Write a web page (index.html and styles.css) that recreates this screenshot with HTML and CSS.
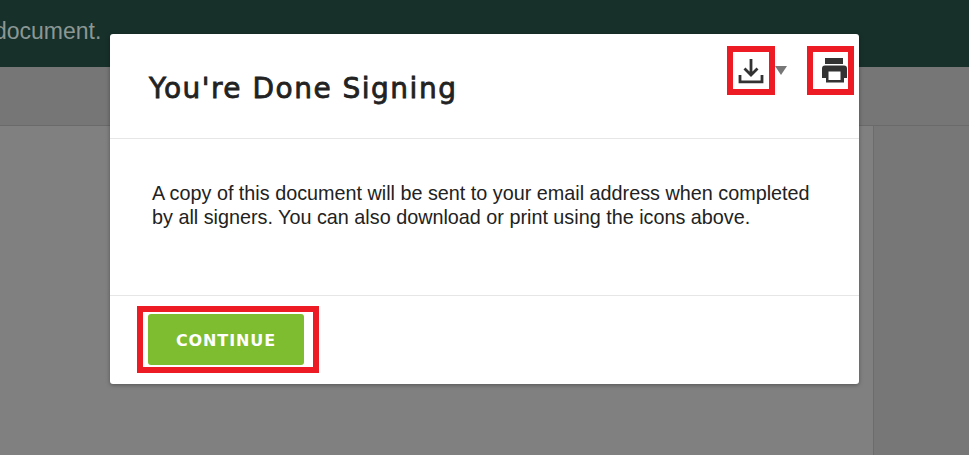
FILE: index.html
```html
<!DOCTYPE html>
<html lang="en">
<head>
    <meta charset="UTF-8">
    <title>You're Done Signing</title>
    <link rel="stylesheet" href="styles.css">
</head>
<body>
    <div class="topbar"><span class="topbar-text">document.</span></div>
    <div class="toolbar"></div>
    <div class="workspace">
        <div class="doc-area"></div>
        <div class="side-panel"></div>
    </div>

    <div class="modal">
        <div class="modal-header">
            <h1>You're Done Signing</h1>
            <div class="modal-tools">
                <span class="mark mark-download">
                    <svg class="icon" width="26" height="26" viewBox="0 0 26 26">
                        <path d="M13 1V17M6.500 10.500L13 17l6.500-6.500" fill="none" stroke="#333" stroke-width="2.800"/>
                        <path d="M2 17v6.800h22V17" fill="none" stroke="#333" stroke-width="2.800"/>
                    </svg>
                </span>
                <span class="caret"></span>
                <span class="mark mark-print">
                    <svg class="icon-print" width="25" height="25" viewBox="0 0 25 25">
                        <path d="M3 0h18v6H3z" fill="#333"/>
                        <path fill-rule="evenodd" d="M3 7.500h19q3 0 3 3V20h-3v4.500H4V20H0v-9.500q0-3 3-3zM6.500 13.500V22h12v-8.500z" fill="#333"/>
                    </svg>
                </span>
            </div>
        </div>
        <div class="modal-body">
            <p>A copy of this document will be sent to your email address when completed by all signers. You can also download or print using the icons above.</p>
        </div>
        <div class="modal-footer">
            <span class="mark mark-continue">
                <button type="button">CONTINUE</button>
            </span>
        </div>
    </div>
</body>
</html>
```

FILE: styles.css
```css
html, body {
    height: 100%;
}
body {
    margin: 0;
    overflow: hidden;
    display: flex;
    flex-direction: column;
    font-family: "Liberation Sans", Arial, sans-serif;
    background-color: #808080;
}
.topbar {
    height: 67px;
    background-color: #17302a;
    color: #8b9794;
    font-size: 23px;
    line-height: 63px;
    white-space: nowrap;
    overflow: hidden;
}
.topbar-text {
    display: block;
    margin-left: -6px;
}
.toolbar {
    height: 58px;
    background-color: #767676;
    border-bottom: 1px solid #6a6a6a;
}
.workspace {
    flex: 1;
    display: flex;
}
.doc-area {
    flex: 1;
}
.side-panel {
    width: 95px;
    border-left: 1px solid #6c6c6c;
    background-color: #777;
}
.modal {
    position: absolute;
    left: 110px;
    top: 34px;
    width: 749px;
    height: 350px;
    background-color: #fff;
    border-radius: 3px;
    box-shadow: 0 1px 4px rgba(0, 0, 0, 0.35);
    display: flex;
    flex-direction: column;
}
.modal-header {
    height: 105px;
    box-sizing: border-box;
    border-bottom: 1px solid #e6e6e6;
    padding: 34px 6px 0 39px;
    display: flex;
    justify-content: space-between;
    align-items: flex-start;
}
h1 {
    margin: 0;
    color: #222;
    font-family: "DejaVu Sans", sans-serif;
    font-size: 28px;
    font-weight: normal;
    line-height: 41px;
    letter-spacing: 1.500px;
    -webkit-text-stroke: 0.8px #222;
}
.modal-tools {
    display: flex;
    align-items: center;
    margin-top: -22px;
}
.mark {
    display: flex;
    align-items: center;
    justify-content: center;
    box-sizing: border-box;
    border: 6px solid #ed1c24;
}
.mark-download {
    width: 48px;
    height: 49px;
}
.mark-print {
    width: 47px;
    height: 49px;
    margin-left: 20px;
    margin-right: -1px;
    padding-left: 7px;
}
.caret {
    width: 0;
    height: 0;
    border-style: solid;
    border-width: 9px 6px 0;
    border-color: #777 transparent transparent;
}
.modal-body {
    flex: 1;
    padding: 42px 30px 0 42px;
}
.modal-body p {
    margin: 0;
    color: #222;
    font-size: 19.800px;
    line-height: 24px;
}
.modal-footer {
    height: 89px;
    box-sizing: border-box;
    border-top: 1px solid #e6e6e6;
    padding: 10px 0 0 27px;
}
.mark-continue {
    width: 182px;
    height: 67px;
    padding-right: 4px;
}
button {
    flex: none;
    width: 156px;
    height: 51px;
    padding: 2px 0 0;
    border: none;
    border-radius: 3px;
    background-color: #7dbd2f;
    color: #fff;
    font-family: "DejaVu Sans", sans-serif;
    font-size: 16px;
    font-weight: bold;
    letter-spacing: 0.900px;
    cursor: pointer;
}
```
